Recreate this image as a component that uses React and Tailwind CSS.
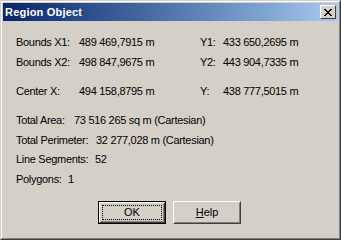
import React from 'react';

const font = { fontFamily: '"Liberation Sans", Arial, sans-serif' };

const Row = ({ label, value, yLabel, yValue }) => {

  return (

    <div className="flex h-[20px] items-center">

      <span className="w-[63px] shrink-0">{label}</span>

      <span className="w-[121px] shrink-0">{value}</span>

      {yLabel && <span className="w-[23px] shrink-0">{yLabel}</span>}

      {yValue && <span>{yValue}</span>}

    </div>

  );

};

const Line = ({ label, width, value }) => {

  return (

    <div className="flex h-[20px] items-center">

      <span className="shrink-0" style={{ width }}>{label}</span>

      <span className="whitespace-nowrap">{value}</span>

    </div>

  );

};

const App = () => {

  return (

    <div
      className="w-[341px] h-[240px] bg-[#d4d0c8] text-black text-[11px] overflow-hidden"
      style={font}
    >

      <div className="w-full h-full border border-t-[#d4d0c8] border-l-[#d4d0c8] border-b-[#404040] border-r-[#404040]">

        <div className="w-full h-full border border-t-white border-l-white border-b-[#808080] border-r-[#808080] p-px flex flex-col">

          {/* title bar */}
          <div className="h-[18px] shrink-0 flex items-center justify-between pl-[2px] pr-[2px] bg-gradient-to-r from-[#0a246a] to-[#a6caf0]">

            <span className="text-white font-bold text-[11px] leading-none tracking-[0.2px]">
              Region Object
            </span>

            <button className="w-[16px] h-[14px] bg-[#d4d0c8] border border-t-white border-l-white border-b-[#404040] border-r-[#404040] flex items-center justify-center p-0">

              <svg width="8" height="7" viewBox="0 0 8 7" shapeRendering="crispEdges">
                <path d="M0 0h2v1h-2zM6 0h2v1h-2zM1 1h2v1h-2zM5 1h2v1h-2zM2 2h4v1h-4zM3 3h2v1h-2zM2 4h4v1h-4zM1 5h2v1h-2zM5 5h2v1h-2zM0 6h2v1h-2zM6 6h2v1h-2z" fill="#000" />
              </svg>

            </button>

          </div>

          {/* body */}
          <div className="flex flex-col pl-[13px] pt-[11px] tracking-[-0.3px]">

            <Row label="Bounds X1:" value="489 469,7915 m" yLabel="Y1:" yValue="433 650,2695 m" />

            <Row label="Bounds X2:" value="498 847,9675 m" yLabel="Y2:" yValue="443 904,7335 m" />

            <div className="h-[9px]" />

            <Row label="Center X:" value="494 158,8795 m" yLabel="Y:" yValue="438 777,5015 m" />

            <div className="h-[9px]" />

            <Line label="Total Area:" width={58} value="73 516 265 sq m (Cartesian)" />

            <Line label="Total Perimeter:" width={80} value="32 277,028 m (Cartesian)" />

            <div className="-mt-px">
              <Line label="Line Segments:" width={79} value="52" />
            </div>

            <Line label="Polygons:" width={52} value="1" />

          </div>

          {/* buttons */}
          <div className="flex justify-center gap-[7px] mt-[12px] pr-[2px]">

            <button className="w-[68px] h-[23px] border border-black p-0 bg-[#d4d0c8]">

              <div className="w-full h-full border border-t-white border-l-white border-b-[#404040] border-r-[#404040]">

                <div className="w-full h-full border border-t-[#d4d0c8] border-l-[#d4d0c8] border-b-[#808080] border-r-[#808080] p-px">

                  <div className="w-full h-full border border-dotted border-black flex items-center justify-center text-[11px]">
                    OK
                  </div>

                </div>

              </div>

            </button>

            <button className="w-[68px] h-[23px] border border-t-white border-l-white border-b-[#404040] border-r-[#404040] p-0 bg-[#d4d0c8]">

              <div className="w-full h-full border border-t-[#d4d0c8] border-l-[#d4d0c8] border-b-[#808080] border-r-[#808080] flex items-center justify-center text-[11px]">
                <span><span className="underline">H</span>elp</span>
              </div>

            </button>

          </div>

        </div>

      </div>

    </div>

  );

};

export default App;
